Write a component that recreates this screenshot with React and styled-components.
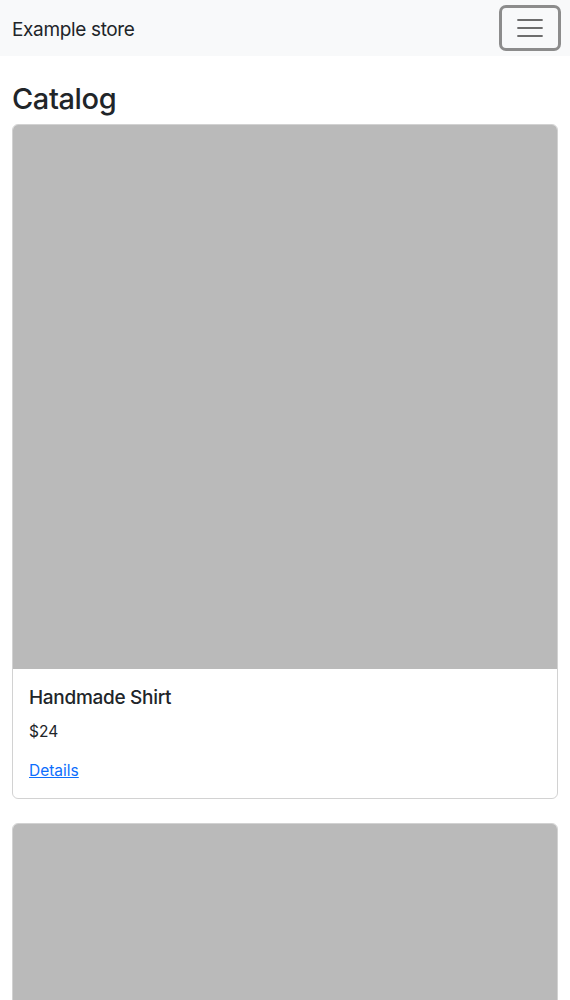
import React from 'react';
import styled, { createGlobalStyle } from 'styled-components';

const GlobalStyle = createGlobalStyle`
  body {
    margin: 0;
    font-family: Inter, "Liberation Sans", sans-serif;
    color: #212529;
    background: #fff;
  }
`;

const Navbar = styled.nav`
  display: flex;
  align-items: center;
  justify-content: space-between;
  height: 56px;
  padding: 0 9px 0 12px;
  background: #f8f9fa;
`;

const Brand = styled.a`
  font-size: 19px;
  color: #212529;
  text-decoration: none;
  letter-spacing: -0.35px;
  padding-top: 2px;
`;

const Toggler = styled.button`
  display: flex;
  align-items: center;
  justify-content: center;
  width: 62px;
  height: 46px;
  padding: 0;
  background: transparent;
  border: 3px solid #8c8c8c;
  border-radius: 7px;
  cursor: pointer;
`;

const Main = styled.main`
  padding: 0 12px;
`;

const Title = styled.h1`
  margin: 26px 0 7px;
  font-size: 29px;
  font-weight: 500;
  line-height: 1.2;
  letter-spacing: -0.4px;
`;

const Card = styled.div`
  display: flex;
  flex-direction: column;
  margin-bottom: 24px;
  border: 1px solid rgba(0, 0, 0, 0.175);
  border-radius: 6px;
  overflow: hidden;
`;

const Thumb = styled.div`
  aspect-ratio: 1 / 1;
  background: #bababa;
`;

const CardBody = styled.div`
  padding: 18px 16px;
`;

const CardTitle = styled.h5`
  margin: 0 0 10px;
  font-size: 19px;
  font-weight: 500;
  line-height: 1.2;
  letter-spacing: -0.3px;
`;

const Price = styled.p`
  margin: 0 0 17px;
  font-size: 15.5px;
  line-height: 1.5;
`;

const Link = styled.a`
  font-size: 15.5px;
  color: #0d6efd;
  text-decoration: underline;
`;

const products = [
  { name: 'Handmade Shirt', price: 24 },
  { name: 'Handmade Pants', price: 32 },
];

const MenuIcon = () => (
  <svg width="26" height="20" viewBox="0 0 26 20">
    <path d="M1 2h24M1 10h24M1 18h24" stroke="#6d6d6d" strokeWidth="1.8" strokeLinecap="round" />
  </svg>
);

const App = () => (
  <>
    <GlobalStyle />
    <Navbar>
      <Brand href="#">Example store</Brand>
      <Toggler aria-label="Toggle navigation">
        <MenuIcon />
      </Toggler>
    </Navbar>
    <Main>
      <Title>Catalog</Title>
      {products.map((p) => (
        <Card key={p.name}>
          <Thumb />
          <CardBody>
            <CardTitle>{p.name}</CardTitle>
            <Price>${p.price}</Price>
            <Link href="#">Details</Link>
          </CardBody>
        </Card>
      ))}
    </Main>
  </>
);

export default App;
